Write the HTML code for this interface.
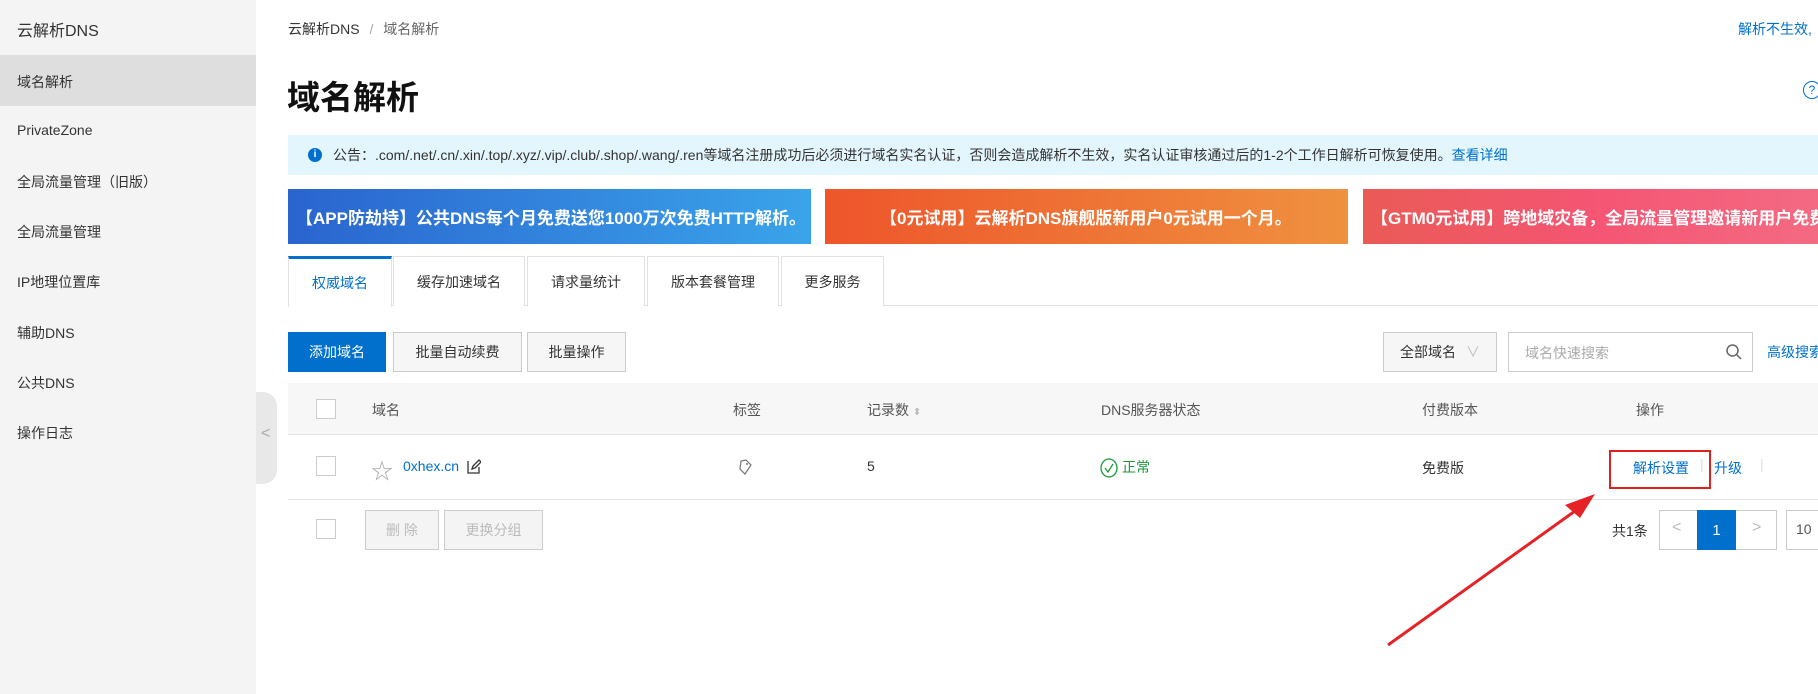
<!DOCTYPE html>
<html><head><meta charset="utf-8"><style>
*{margin:0;padding:0;box-sizing:border-box}
body{width:1818px;height:694px;overflow:hidden;background:#fff;font-family:"Liberation Sans","Noto Sans CJK SC",sans-serif;font-size:14px;color:#333;position:relative}
.a{position:absolute;white-space:nowrap}
.side{position:absolute;left:0;top:0;width:256px;height:694px;background:#f4f4f4}
.side .a{left:17px;font-size:14px;color:#333}
.btn{position:absolute;height:40px;border:1px solid #ccc;background:#f6f6f6;color:#333;font-size:14px;display:flex;align-items:center;justify-content:center}
.tab{position:absolute;top:256px;height:50px;border:1px solid #e1e1e1;border-bottom:none;display:flex;align-items:center;justify-content:center;font-size:14px;color:#333;background:#fff}
.cb{position:absolute;width:20px;height:20px;border:1px solid #ccc;background:#fff}
.ban{position:absolute;top:189px;height:55px;color:#fff;font-weight:bold;font-size:17px;display:flex;align-items:center;padding-left:8px;white-space:nowrap;overflow:hidden}
</style></head><body>
<div class="side">
<div class="a" style="top:17px;font-size:16px">云解析DNS</div>
<div style="position:absolute;left:0;top:55px;width:256px;height:51px;background:#dedede"></div>
<div class="a" style="top:72px">域名解析</div>
<div class="a" style="top:122px">PrivateZone</div>
<div class="a" style="top:172px">全局流量管理（旧版）</div>
<div class="a" style="top:222px">全局流量管理</div>
<div class="a" style="top:272px">IP地理位置库</div>
<div class="a" style="top:323px">辅助DNS</div>
<div class="a" style="top:373px">公共DNS</div>
<div class="a" style="top:423px">操作日志</div>
</div>
<div style="position:absolute;left:256px;top:392px;width:21px;height:92px;background:#e8e8e8;border-radius:0 14px 14px 0"></div>
<div class="a" style="left:261px;top:425px;color:#aaa;font-size:16px">&lt;</div>

<div class="a" style="left:288px;top:19px;font-size:14px;color:#333">云解析DNS <span style="color:#aaa;margin:0 6px">/</span> <span style="color:#666">域名解析</span></div>
<div class="a" style="left:1738px;top:19px;font-size:14px;color:#0070cc">解析不生效,</div>
<div class="a" style="left:287px;top:71px;font-size:33px;font-weight:bold;color:#111">域名解析</div>
<div class="a" style="left:1803px;top:81px;width:18px;height:18px;border:1px solid #0070cc;border-radius:50%;color:#0070cc;font-size:12px;text-align:center;line-height:16px">?</div>

<div style="position:absolute;left:288px;top:135px;width:1530px;height:40px;background:#e4f6fd"></div>
<div class="a" style="left:308px;top:148px;width:14px;height:14px;border-radius:50%;background:#0070cc;color:#fff;font-size:10px;text-align:center;line-height:14px;font-weight:bold">i</div>
<div class="a" style="left:333px;top:145px;font-size:14px;color:#333">公告：.com/.net/.cn/.xin/.top/.xyz/.vip/.club/.shop/.wang/.ren等域名注册成功后必须进行域名实名认证，否则会造成解析不生效，实名认证审核通过后的1-2个工作日解析可恢复使用。<span style="color:#0070cc">查看详细</span></div>

<div class="ban" style="left:288px;width:523px;background:linear-gradient(90deg,#2a64cf,#3aa4ea)">【APP防劫持】公共DNS每个月免费送您1000万次免费HTTP解析。</div>
<div class="ban" style="left:825px;width:523px;background:linear-gradient(90deg,#ee552b,#ef913f);padding-left:55px">【0元试用】云解析DNS旗舰版新用户0元试用一个月。</div>
<div class="ban" style="left:1363px;width:455px;background:linear-gradient(90deg,#ea5b56,#f45573,#f46a82)">【GTM0元试用】跨地域灾备，全局流量管理邀请新用户免费</div>

<div style="position:absolute;left:288px;top:305px;width:1530px;height:1px;background:#e1e1e1"></div>
<div class="tab" style="left:288px;width:104px;color:#0070cc;border-top:3px solid #0070cc;height:51px">权威域名</div>
<div class="tab" style="left:393px;width:132px">缓存加速域名</div>
<div class="tab" style="left:527px;width:118px">请求量统计</div>
<div class="tab" style="left:647px;width:132px">版本套餐管理</div>
<div class="tab" style="left:781px;width:103px">更多服务</div>

<div class="btn" style="left:288px;top:332px;width:98px;background:#0070cc;border-color:#0070cc;color:#fff">添加域名</div>
<div class="btn" style="left:393px;top:332px;width:129px">批量自动续费</div>
<div class="btn" style="left:527px;top:332px;width:99px">批量操作</div>
<div class="btn" style="left:1383px;top:332px;width:114px;color:#333;background:#f6f6f6">全部域名 <span style="color:#bbb;margin-left:10px">∨</span></div>
<div style="position:absolute;left:1508px;top:332px;width:245px;height:40px;border:1px solid #ccc;background:#fff"></div>
<div class="a" style="left:1525px;top:343px;color:#aaa">域名快速搜索</div>
<svg class="a" style="left:1725px;top:343px" width="18" height="18" viewBox="0 0 18 18"><circle cx="7.5" cy="7.5" r="5.5" fill="none" stroke="#666" stroke-width="1.5"/><path d="M11.5 11.5L16 16" stroke="#666" stroke-width="1.5"/></svg>
<div class="a" style="left:1767px;top:342px;color:#0070cc">高级搜索</div>

<div style="position:absolute;left:288px;top:383px;width:1530px;height:52px;background:#f7f7f7;border-bottom:1px solid #e3e3e3"></div>
<div class="cb" style="left:316px;top:399px"></div>
<div class="a" style="left:372px;top:400px;color:#555">域名</div>
<div class="a" style="left:733px;top:400px;color:#555">标签</div>
<div class="a" style="left:867px;top:400px;color:#555">记录数 <span style="color:#bbb;font-size:10px">⬍</span></div>
<div class="a" style="left:1101px;top:400px;color:#555">DNS服务器状态</div>
<div class="a" style="left:1422px;top:400px;color:#555">付费版本</div>
<div class="a" style="left:1636px;top:400px;color:#555">操作</div>

<div style="position:absolute;left:288px;top:499px;width:1530px;height:1px;background:#e3e3e3"></div>
<div class="cb" style="left:316px;top:456px"></div>
<div class="a" style="left:371px;top:454px;color:#aaa;font-size:22px">☆</div>
<div class="a" style="left:403px;top:458px;color:#0070cc">0xhex.cn</div>
<svg class="a" style="left:467px;top:459px" width="14" height="15" viewBox="0 0 14 15"><path d="M1 2v12h11V8" fill="none" stroke="#333" stroke-width="1.3"/><path d="M5 10l1-3 6-6 2 2-6 6z" fill="none" stroke="#333" stroke-width="1.3"/></svg>
<svg class="a" style="left:739px;top:459px" width="14" height="16" viewBox="0 0 14 16"><path d="M7 1l5 5-6 9-5-5 1-8z" fill="none" stroke="#777" stroke-width="1.2"/><circle cx="8" cy="5" r="1" fill="#777"/></svg>
<div class="a" style="left:867px;top:458px">5</div>
<svg class="a" style="left:1100px;top:458px" width="18" height="20" viewBox="0 0 18 20"><ellipse cx="9" cy="10" rx="8" ry="9" fill="none" stroke="#1a9a3a" stroke-width="1.3"/><path d="M5 10l3 4 5-8" fill="none" stroke="#1a9a3a" stroke-width="1.3"/></svg>
<div class="a" style="left:1122px;top:457px;color:#1a9a3a">正常</div>
<div class="a" style="left:1422px;top:458px">免费版</div>
<div style="position:absolute;left:1609px;top:450px;width:102px;height:39px;border:2px solid #e02020"></div>
<div class="a" style="left:1633px;top:458px;color:#0070cc">解析设置</div>
<div class="a" style="left:1700px;top:456px;color:#ddd">|</div>
<div class="a" style="left:1714px;top:458px;color:#0070cc">升级</div>
<div class="a" style="left:1760px;top:456px;color:#ddd">|</div>

<div class="cb" style="left:316px;top:519px"></div>
<div class="btn" style="left:365px;top:510px;width:74px;color:#bbb;background:#f4f4f4">删 除</div>
<div class="btn" style="left:444px;top:510px;width:99px;color:#bbb;background:#f4f4f4">更换分组</div>
<div class="a" style="left:1612px;top:521px;color:#333">共1条</div>
<div style="position:absolute;left:1659px;top:510px;width:118px;height:40px;border:1px solid #ccc;background:#fff"></div>
<div class="a" style="left:1672px;top:519px;color:#bbb;font-size:16px">&lt;</div>
<div style="position:absolute;left:1697px;top:510px;width:39px;height:40px;background:#0070cc;color:#fff;display:flex;align-items:center;justify-content:center;font-size:15px">1</div>
<div class="a" style="left:1752px;top:519px;color:#bbb;font-size:16px">&gt;</div>
<div style="position:absolute;left:1786px;top:510px;width:40px;height:40px;border:1px solid #ccc;background:#fff"></div>
<div class="a" style="left:1796px;top:521px;color:#555">10</div>

<svg style="position:absolute;left:0;top:0" width="1818" height="694"><path d="M1388 645L1575 511" stroke="#e52226" stroke-width="3"/><path d="M1595 494L1565 505L1580 518z" fill="#e52226"/></svg>
</body></html>
